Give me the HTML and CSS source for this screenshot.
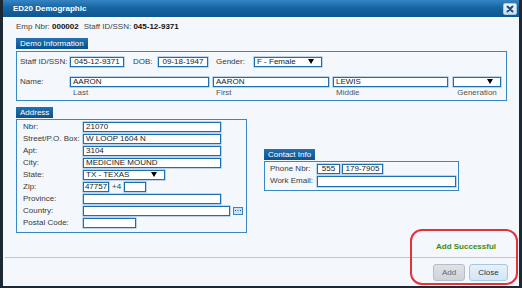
FILE: index.html
```html
<!DOCTYPE html>
<html>
<head>
<meta charset="utf-8">
<link rel="stylesheet" href="styles.css">
</head>
<body>
<div class="dlg">
  <div class="titlebar">
    <span class="ttl">ED20 Demographic</span>
    <span class="xbtn"><svg width="8" height="8" viewBox="0 0 8 8"><path d="M1.5 1.5 L6.5 6.5 M6.5 1.5 L1.5 6.5" stroke="#1f4f80" stroke-width="2" stroke-linecap="round"/></svg></span>
  </div>
  <div class="content">
    <div class="empline">Emp Nbr: <b>000002</b><span class="sp">Staff ID/SSN:</span> <b>045-12-9371</b></div>

    <div class="tab">Demo Information</div>
    <div class="box demo">
      <div class="row">
        <span class="lbl w50">Staff ID/SSN:</span>
        <span class="fld c w-ssn">045-12-9371</span>
        <span class="lbl dob-l">DOB:</span>
        <span class="fld c w-dob">09-18-1947</span>
        <span class="lbl gen-l">Gender:</span>
        <span class="fld sel w-gender">F - Female<i class="arr"></i></span>
      </div>
      <div class="row row2">
        <span class="lbl w50">Name:</span>
        <span class="fld w-last">AARON</span>
        <span class="fld w-first g4">AARON</span>
        <span class="fld w-mid g4">LEWIS</span>
        <span class="fld sel w-gen g5"><i class="arr"></i></span>
      </div>
      <div class="row subs">
        <span class="w50"></span>
        <span class="sub w-last">Last</span>
        <span class="sub w-first g4">First</span>
        <span class="sub w-mid g4">Middle</span>
        <span class="sub w-gen g5 ctr">Generation</span>
      </div>
    </div>

    <div class="lower">
      <div class="addr-col">
        <div class="tab">Address</div>
        <div class="box addr">
          <div class="arow"><span class="lbl w60">Nbr:</span><span class="fld w-addr">21070</span></div>
          <div class="arow"><span class="lbl w60">Street/P.O. Box:</span><span class="fld w-addr">W LOOP 1604 N</span></div>
          <div class="arow"><span class="lbl w60">Apt:</span><span class="fld w-addr">3104</span></div>
          <div class="arow"><span class="lbl w60">City:</span><span class="fld w-addr">MEDICINE MOUND</span></div>
          <div class="arow"><span class="lbl w60">State:</span><span class="fld sel w-state">TX - TEXAS<i class="arr"></i></span></div>
          <div class="arow"><span class="lbl w60">Zip:</span><span class="fld c w-zip">47757</span><span class="lbl plus4">+4</span><span class="fld w-zip4"></span></div>
          <div class="arow"><span class="lbl w60">Province:</span><span class="fld w-addr"></span></div>
          <div class="arow"><span class="lbl w60">Country:</span><span class="fld w-country"></span><span class="dots"><svg width="8" height="6" viewBox="0 0 8 6"><rect x="1" y="3" width="1" height="1" fill="#1f4f80"/><rect x="3.5" y="3" width="1" height="1" fill="#1f4f80"/><rect x="6" y="3" width="1" height="1" fill="#1f4f80"/></svg></span></div>
          <div class="arow"><span class="lbl w60">Postal Code:</span><span class="fld w-postal"></span></div>
        </div>
      </div>
      <div class="contact-col">
        <div class="tab">Contact Info</div>
        <div class="box contact">
          <div class="crow"><span class="lbl w47">Phone Nbr:</span><span class="fld c w-ph1">555</span><span class="fld c w-ph2">179-7905</span></div>
          <div class="crow"><span class="lbl w47">Work Email:</span><span class="fld w-email"></span></div>
        </div>
      </div>
    </div>
  </div>

  <div class="msg">Add Successful</div>
  <div class="hr"></div>
  <div class="btns">
    <span class="btn add">Add</span>
    <span class="btn close">Close</span>
  </div>

  <div class="annot"></div>
</div>
</body>
</html>
```

FILE: styles.css
```css
html, body {
  margin: 0;
  padding: 0;
}
body {
  width: 522px;
  height: 288px;
  overflow: hidden;
  background: #1c2834;
  font-family: "Liberation Sans", Arial, sans-serif;
  font-size: 8px;
  color: #3a3a3a;
}
.dlg {
  position: relative;
  margin-left: 3px;
  width: 516px;
  height: 286px;
  background: #f4f7fb;
  display: flex;
  flex-direction: column;
}
.titlebar {
  height: 17px;
  flex: none;
  border-bottom: 1px solid #ffffff;
  background: linear-gradient(#3584c3, #1865a3 45%, #0d5691);
  display: flex;
  align-items: center;
  justify-content: space-between;
  padding: 0 2px 0 10px;
}
.ttl {
  color: #ffffff;
  font-weight: bold;
  font-size: 8px;
}
.xbtn {
  width: 14px;
  height: 12px;
  box-sizing: border-box;
  border: 1px solid #a9c6df;
  border-radius: 2px;
  background: linear-gradient(#f1f6fb, #cfdeec);
  display: flex;
  align-items: center;
  justify-content: center;
}
.content {
  padding-left: 13px;
}
.empline {
  margin-top: 4px;
  height: 10px;
  line-height: 10px;
  color: #444;
}
.empline b {
  color: #111;
}
.empline .sp {
  margin-left: 5px;
}
.tab {
  width: max-content;
  height: 11px;
  line-height: 11px;
  padding: 0 4px;
  color: #ffffff;
  background: linear-gradient(#2471b0, #0b5290);
  margin-top: 6px;
}
.box {
  box-sizing: border-box;
  border: 1px solid #3a87c6;
}
.demo {
  margin-top: 2px;
  width: 491px;
  height: 50px;
  padding: 5px 0 0 3px;
}
.row {
  display: flex;
  align-items: center;
  height: 10px;
}
.row2 {
  margin-top: 10px;
}
.subs {
  margin-top: 1px;
  color: #555;
}
.lbl {
  flex: none;
  white-space: nowrap;
  line-height: 10px;
}
.fld {
  flex: none;
  position: relative;
  box-sizing: border-box;
  height: 10px;
  border: 1px solid #1d6db1;
  box-shadow: 0 0 0 0.6px rgba(40, 120, 190, 0.45);
  background: #ffffff;
  line-height: 8px;
  color: #1a1a1a;
  padding: 0 2px;
  white-space: nowrap;
  overflow: hidden;
}
.fld.c {
  text-align: center;
  padding: 0;
}
.arr {
  position: absolute;
  right: 7px;
  top: 1px;
  width: 0;
  height: 0;
  border-left: 3px solid transparent;
  border-right: 3px solid transparent;
  border-top: 5px solid #000;
}
.sub {
  flex: none;
  padding-left: 3px;
  box-sizing: border-box;
  line-height: 10px;
}
.sub.ctr {
  text-align: center;
  padding-left: 0;
}
.w50 { width: 50px; flex: none; }
.w60 { width: 60px; }
.w47 { width: 47px; }
.w-ssn { width: 54px; }
.dob-l { margin-left: 9px; width: 25px; }
.w-dob { width: 50px; }
.gen-l { margin-left: 8px; width: 38px; }
.w-gender { width: 68px; }
.w-last { width: 139px; }
.w-first { width: 116px; }
.w-mid { width: 115px; }
.w-gen { width: 48px; }
.g4 { margin-left: 4px; }
.g5 { margin-left: 5px; }

.lower {
  display: flex;
  align-items: flex-start;
}
.addr-col {
  width: 231px;
}
.addr {
  margin-top: 1px;
  height: 114px;
  padding: 2px 0 0 6px;
}
.arow {
  display: flex;
  align-items: center;
  height: 10px;
  margin-bottom: 2px;
}
.w-addr { width: 138px; }
.w-state { width: 82px; }
.w-zip { width: 26px; }
.plus4 { margin-left: 3px; width: 12px; }
.w-zip4 { width: 22px; }
.w-country { width: 147px; }
.w-postal { width: 53px; }
.dots {
  flex: none;
  margin-left: 3px;
  width: 10px;
  height: 8px;
  box-sizing: border-box;
  border: 1px solid #3a86c4;
  background: #cfe2f3;
  display: flex;
  align-items: flex-start;
  justify-content: center;
  overflow: hidden;
}
.dots svg {
  display: block;
  margin-top: -1px;
}
.contact-col {
  margin-left: 17px;
  margin-top: 42px;
}
.contact {
  margin-top: 1px;
  width: 195px;
  height: 30px;
  padding: 2px 0 0 5px;
}
.crow {
  display: flex;
  align-items: center;
  height: 10px;
  margin-bottom: 2px;
}
.crow + .crow .fld {
  height: 11px;
}
.w-ph1 { width: 23px; }
.w-ph2 { width: 41px; margin-left: 2px; }
.w-email { width: 139px; }

.msg {
  margin-top: 9px;
  height: 10px;
  line-height: 10px;
  text-align: right;
  padding-right: 23px;
  color: #3b8c12;
  font-weight: bold;
}
.hr {
  margin: 5px 2px 0 2px;
  height: 1px;
  background: #a5cfea;
}
.btns {
  display: flex;
  justify-content: flex-end;
  gap: 4px;
  padding-right: 11px;
  margin-top: 6px;
}
.btn {
  height: 17px;
  box-sizing: border-box;
  border-radius: 3px;
  line-height: 15px;
  text-align: center;
}
.add {
  width: 32px;
  background: linear-gradient(#dfe3e8, #cdd3da);
  border: 1px solid #b5bfca;
  color: #5f6873;
}
.close {
  width: 39px;
  background: linear-gradient(#e6f1fa, #d3e5f5);
  border: 1px solid #a6c8e6;
  color: #1d3550;
}
.annot {
  position: absolute;
  left: 407px;
  top: 229px;
  width: 108px;
  height: 56px;
  box-sizing: border-box;
  border: 2.5px solid #e5313b;
  border-radius: 12px;
}
```
